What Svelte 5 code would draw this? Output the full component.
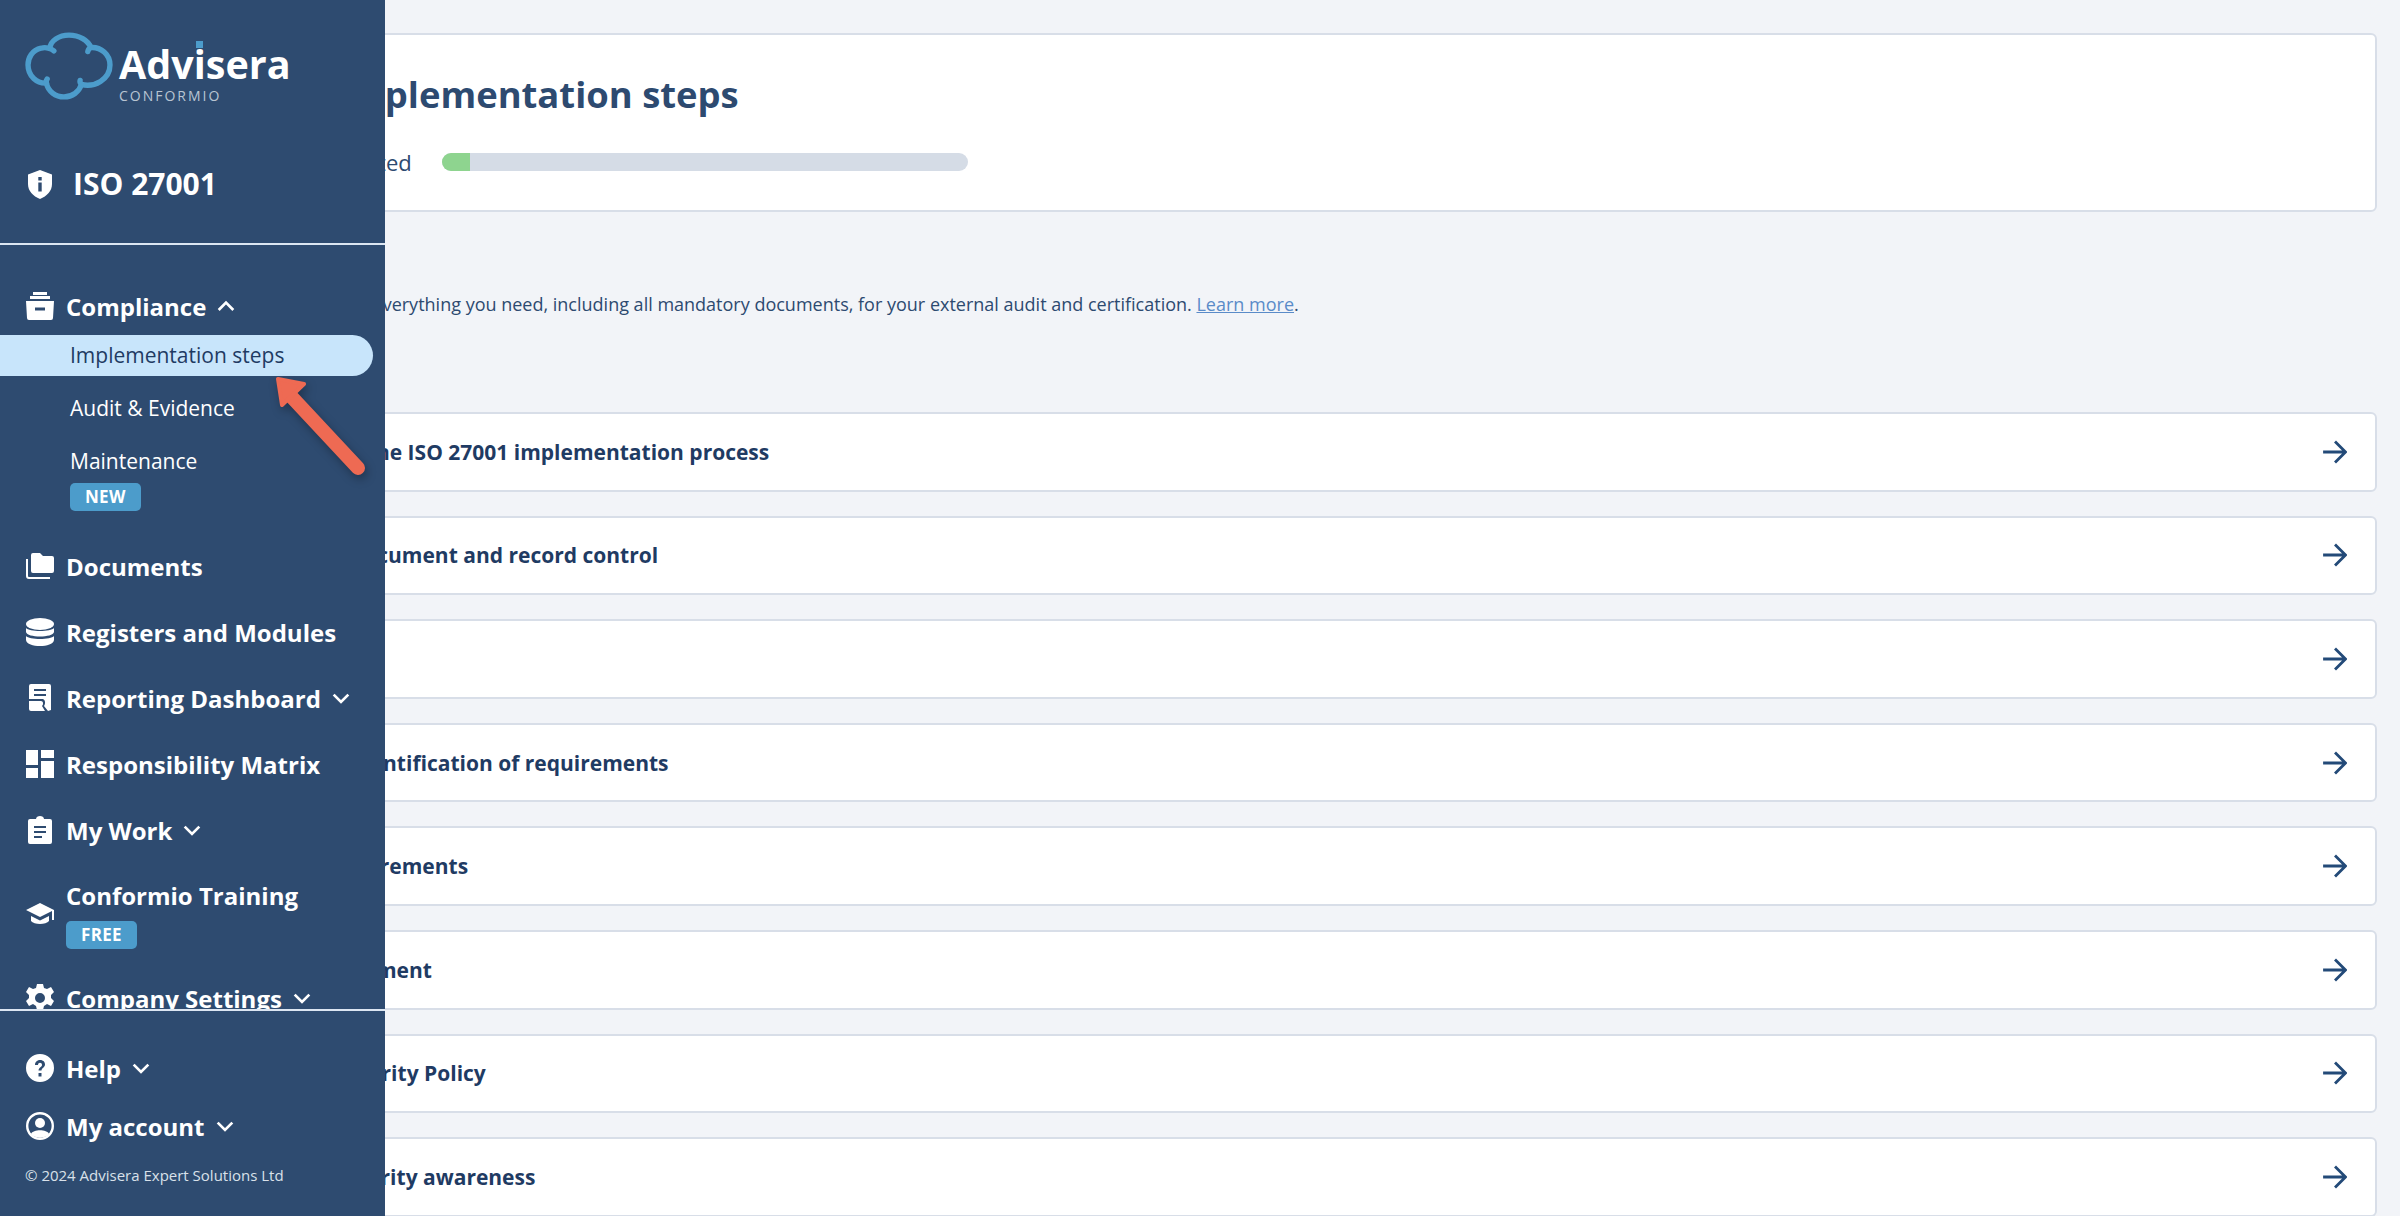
<script>
  const rows = [
    { text: 'See the ISO 27001 implementation process', shift: -4 },
    { text: 'A document and record control', shift: 2 },
    { text: 'ISMS', shift: 0 },
    { text: 'A identification of requirements', shift: 2 },
    { text: 'Requirements', shift: -9 },
    { text: 'Treatment', shift: -9 },
    { text: 'Security Policy', shift: 4 },
    { text: 'Security awareness', shift: 3 }
  ];
  const chev = 'M1.500 5l6.500 6.500L14.500 5';
</script>

<div class="page">
  <main class="main">
    <section class="hero">
      <h1>Implementation steps</h1>
      <div class="progress-line">
        <span class="label">Started</span>
        <div class="track"><div class="fill"></div></div>
      </div>
    </section>
    <p class="intro">Find everything you need, including all mandatory documents, for your external audit and certification. <a href="#top">Learn more</a>.</p>
    <div class="rows">
      {#each rows as r}
        <div class="row">
          <span class="row-text" style:margin-left="{r.shift}px">{r.text}</span>
          <svg class="arrow" viewBox="0 0 24 24" fill="none" stroke="currentColor" stroke-width="2.800" stroke-linecap="square" stroke-linejoin="miter"><path d="M1.500 12h20M13 2.500 22.500 12 13 21.500"/></svg>
        </div>
      {/each}
    </div>
  </main>

  <aside class="side">
    <header class="top">
      <div class="logo">
        <svg class="cloud" viewBox="44 34 262 202" fill="none" stroke="#4c9ccb" stroke-width="16" stroke-linecap="round">
          <path d="M130 90C122 82 105 78 92 82 65 88 53 110 53 132 53 165 80 188 108 186"/>
          <path d="M110 174C106 180 106 186 108 186 112 210 135 227 160 227 185 227 205 212 212 190 208 186 207 182 208 178"/>
          <path d="M212 190C250 200 297 175 297 132 297 100 270 78 240 80 235 82 232 87 231 92"/>
          <path d="M240 80C232 58 205 43 175 43 145 43 120 60 118 82"/>
        </svg>
        <div class="brand">
          <span class="adv">Adv<span class="i">i</span>sera</span>
          <span class="conf">CONFORMIO</span>
        </div>
      </div>
      <div class="iso">
        <svg class="shield" viewBox="0 0 24 29"><path fill="#fff" fill-rule="evenodd" d="M12 0 24 4.500v9.500c0 7-5 12-12 15C5 26 0 21 0 14V4.500zM10.300 7h3.400v3.400h-3.400zM10.300 12.500h3.400v9h-3.400z"/></svg>
        <span>ISO 27001</span>
      </div>
    </header>

    <nav class="scroll">
      <div class="item first">
        <svg class="ico" viewBox="0 0 28 28"><path fill="#fff" fill-rule="evenodd" d="M7 0h14v3H7zM4 4h20v3H4zM0 9h28l-1 17a2 2 0 0 1-2 2H3a2 2 0 0 1-2-2zM9 15.500v3h10v-3z"/></svg>
        <span>Compliance</span>
        <svg class="chev" viewBox="0 0 16 16" fill="none" stroke="#fff" stroke-width="2.400"><path d="M1.500 11.500 8 5l6.500 6.500"/></svg>
      </div>
      <div class="sub active">Implementation steps</div>
      <div class="sub">Audit &amp; Evidence</div>
      <div class="sub tight">Maintenance</div>
      <span class="badge new">NEW</span>

      <div class="item">
        <svg class="ico" viewBox="0 0 28 26"><path fill="#fff" d="M7 0h7l3 3h9a2 2 0 0 1 2 2v13a2 2 0 0 1-2 2H7a2 2 0 0 1-2-2V2a2 2 0 0 1 2-2z"/><path fill="none" stroke="#fff" stroke-width="2" d="M1 6v17a2 2 0 0 0 2 2h21"/></svg>
        <span>Documents</span>
      </div>
      <div class="item">
        <svg class="ico" viewBox="0 0 28 28"><ellipse cx="14" cy="6" rx="14" ry="6" fill="#fff"/><path fill="#fff" d="M0 10c3 4 25 4 28 0v4c-1 6-27 6-28 0zM0 18c3 4 25 4 28 0v4c-1 8-27 8-28 0z"/></svg>
        <span>Registers and Modules</span>
      </div>
      <div class="item">
        <svg class="ico" viewBox="0 0 28 28"><path fill="#fff" fill-rule="evenodd" d="M5 0h18a2 2 0 0 1 2 2v24l-3 1-4-5c2-3 1-6-1-7H3V2a2 2 0 0 1 2-2zM8 5v2h12V5zM8 10v2h12v-2zM3 17h12c2 0 3 3 1 5l3 5H5a2 2 0 0 1-2-2z"/></svg>
        <span>Reporting Dashboard</span>
        <svg class="chev" viewBox="0 0 16 16" fill="none" stroke="#fff" stroke-width="2.400"><path d={chev}/></svg>
      </div>
      <div class="item">
        <svg class="ico" viewBox="0 0 28 28"><path fill="#fff" d="M0 0h12v15H0zM15 0h13v8H15zM15 11h13v17H15zM0 18h12v10H0z"/></svg>
        <span>Responsibility Matrix</span>
      </div>
      <div class="item">
        <svg class="ico" viewBox="0 0 28 28"><path fill="#fff" fill-rule="evenodd" d="M4 3h6c0-4 8-4 8 0h6a2 2 0 0 1 2 2v21a2 2 0 0 1-2 2H4a2 2 0 0 1-2-2V5a2 2 0 0 1 2-2zM8 10v2h12v-2zM8 15v2h12v-2zM8 20v2h8v-2z"/></svg>
        <span>My Work</span>
        <svg class="chev" viewBox="0 0 16 16" fill="none" stroke="#fff" stroke-width="2.400"><path d={chev}/></svg>
      </div>
      <div class="item training">
        <svg class="ico" viewBox="0 0 28 24"><path fill="#fff" d="M14 1 0 8l14 7 12-6v9h2V8zM5 14v5c3 4 15 4 18 0v-5l-9 4.500z"/></svg>
        <div class="stack">
          <span>Conformio Training</span>
          <span class="badge free">FREE</span>
        </div>
      </div>
      <div class="item">
        <svg class="ico" viewBox="0 0 28 28"><path fill="#fff" fill-rule="evenodd" d="M11 0h6l1 4 3 1 4-2 3 5-3 3v3l3 3-3 5-4-2-3 2-1 4h-6l-1-4-3-2-4 2-3-5 3-3v-3L0 8l3-5 4 2 3-1zM14 9a5 5 0 1 0 0 10 5 5 0 0 0 0-10z"/></svg>
        <span>Company Settings</span>
        <svg class="chev" viewBox="0 0 16 16" fill="none" stroke="#fff" stroke-width="2.400"><path d={chev}/></svg>
      </div>
    </nav>

    <footer class="bottom">
      <div class="item">
        <svg class="ico" viewBox="0 0 28 28"><path fill="#fff" fill-rule="evenodd" d="M14 0a14 14 0 1 1 0 28 14 14 0 0 1 0-28zM9 11h3c0-3 4-3 4 0 0 2-3 2-3.500 5.500h3c0-2.500 3.500-3 3.500-6 0-6-10-6-10 .5zM12.500 19v3.500h3V19z"/></svg>
        <span>Help</span>
        <svg class="chev" viewBox="0 0 16 16" fill="none" stroke="#fff" stroke-width="2.400"><path d={chev}/></svg>
      </div>
      <div class="item">
        <svg class="ico" viewBox="0 0 28 28"><circle cx="14" cy="14" r="12.800" fill="none" stroke="#fff" stroke-width="2.400"/><circle cx="14" cy="11" r="5" fill="#fff"/><path fill="#fff" d="M5 22c2-5 16-5 18 0-4 5-14 5-18 0z"/></svg>
        <span>My account</span>
        <svg class="chev" viewBox="0 0 16 16" fill="none" stroke="#fff" stroke-width="2.400"><path d={chev}/></svg>
      </div>
      <p class="copy">© 2024 Advisera Expert Solutions Ltd</p>
    </footer>

    <svg class="pointer" viewBox="0 0 110 120" fill="none">
      <path d="M16 21 86 96" stroke="#ee6a53" stroke-width="14" stroke-linecap="round"/>
      <path d="M6 7 32 12 10 33z" fill="#ee6a53" stroke="#ee6a53" stroke-width="4" stroke-linejoin="round"/>
    </svg>
  </aside>
</div>

<style>
  :global(body) {
    margin: 0;
    background: #f2f4f8;
    font-family: "Open Sans", sans-serif;
    color: #1f3b63;
  }
  .page {
    position: relative;
    width: 2400px;
    height: 1216px;
    overflow: hidden;
  }
  .main {
    display: flex;
    flex-direction: column;
    padding: 33px 23px 0 300px;
  }
  .hero {
    background: #fff;
    border: 2px solid #d8dee8;
    border-radius: 6px;
    height: 179px;
    box-sizing: border-box;
    padding: 34px 35px 0;
  }
  h1 {
    margin: 0;
    font-size: 36.400px;
    line-height: 50px;
    font-weight: 700;
    color: #2d4a70;
  }
  .progress-line {
    display: flex;
    align-items: center;
    gap: 30px;
    margin-top: 29px;
  }
  .label {
    font-size: 22px;
    line-height: 28px;
    color: #2d4a70;
  }
  .track {
    width: 526px;
    height: 18px;
    border-radius: 9px;
    background: #d5dce6;
    overflow: hidden;
  }
  .fill {
    width: 28px;
    height: 100%;
    background: #8ed48f;
  }
  .intro {
    margin: 80px 0 0;
    padding-left: 32px;
    font-size: 18px;
    line-height: 24px;
    color: #2d4a70;
  }
  .intro a {
    color: #5a8bc8;
  }
  .rows {
    display: flex;
    flex-direction: column;
    gap: 24px;
    margin-top: 96px;
  }
  .row {
    height: 79.600px;
    box-sizing: border-box;
    background: #fff;
    border: 2px solid #d8dee8;
    border-radius: 6px;
    display: flex;
    align-items: center;
    justify-content: space-between;
    padding: 0 28px 0 27px;
  }
  .row-text {
    font-size: 21px;
    font-weight: 700;
    color: #1f3b63;
  }
  .arrow {
    width: 24px;
    height: 24px;
    color: #234a78;
  }
  .side {
    position: absolute;
    inset: 0 auto 0 0;
    width: 385px;
    background: #2e4b70;
    color: #fff;
    display: flex;
    flex-direction: column;
  }
  .top {
    height: 245px;
    flex: none;
    box-sizing: border-box;
    border-bottom: 2px solid #dce6f2;
    padding: 32px 0 0 25px;
  }
  .logo {
    display: flex;
    align-items: flex-start;
    gap: 6px;
  }
  .cloud {
    width: 88px;
    height: 68px;
  }
  .brand {
    display: flex;
    flex-direction: column;
    margin-top: 11px;
  }
  .adv {
    display: block;
    font-size: 39.500px;
    line-height: 42px;
    font-weight: 700;
  }
  .i {
    position: relative;
  }
  .i::after {
    content: "";
    position: absolute;
    left: 2px;
    top: 4px;
    width: 7px;
    height: 7px;
    background: #4c9ccb;
  }
  .conf {
    display: block;
    margin-top: 4px;
    font-size: 14px;
    line-height: 14px;
    letter-spacing: 2px;
    color: #b9c5d3;
  }
  .iso {
    display: flex;
    align-items: center;
    gap: 21px;
    margin-top: 61px;
    padding-left: 3px;
    font-size: 30px;
    line-height: 40px;
    font-weight: 700;
  }
  .shield {
    width: 24px;
    height: 29px;
  }
  .scroll {
    flex: none;
    height: 766px;
    overflow: hidden;
    border-bottom: 2px solid #dce6f2;
    box-sizing: border-box;
    display: flex;
    flex-direction: column;
  }
  .item {
    display: flex;
    align-items: center;
    flex: none;
    height: 66px;
    padding-left: 26px;
    font-size: 24px;
    font-weight: 700;
    color: #fff;
  }
  .item.first {
    height: 40px;
    margin-top: 41px;
    margin-bottom: 9px;
  }
  .ico {
    width: 28px;
    height: 28px;
    flex: none;
    margin-right: 12px;
  }
  .chev {
    width: 18px;
    height: 18px;
    margin-left: 11px;
  }
  .sub {
    flex: none;
    height: 41px;
    line-height: 41px;
    padding-left: 70px;
    margin-bottom: 12px;
    font-size: 21px;
    color: #fff;
    width: 373px;
    box-sizing: border-box;
  }
  .sub.active {
    background: #c8e5fb;
    color: #1f3b63;
    border-radius: 0 21px 21px 0;
  }
  .sub.tight {
    margin-bottom: 1px;
  }
  .badge {
    align-self: flex-start;
    background: #4c9ccb;
    color: #fff;
    font-size: 17px;
    font-weight: 700;
    line-height: 28px;
    height: 28px;
    border-radius: 5px;
    padding: 0 15px;
    letter-spacing: 0.3px;
  }
  .new {
    margin-left: 70px;
    margin-bottom: 22px;
  }
  .stack {
    display: flex;
    flex-direction: column;
    gap: 9px;
  }
  .training {
    height: 102px;
  }
  .bottom {
    flex: 1;
    padding-top: 28px;
  }
  .bottom .item {
    height: 58px;
  }
  .copy {
    margin: 10px 0 0 25px;
    font-size: 15px;
    line-height: 20px;
    color: #d9e1ea;
  }
  .pointer {
    position: absolute;
    left: 272px;
    top: 372px;
    width: 110px;
    height: 120px;
    filter: drop-shadow(2px 4px 5px rgba(0, 0, 0, 0.3));
  }
</style>
